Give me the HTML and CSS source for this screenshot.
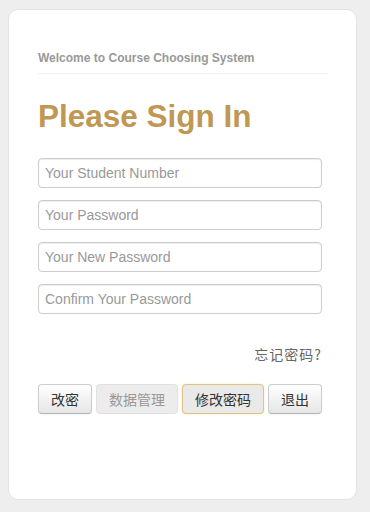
FILE: index.html
```html
<!DOCTYPE html>
<html lang="zh">
<head>
<meta charset="utf-8">
<title>Please Sign In</title>
<link rel="stylesheet" href="styles.css">
</head>
<body>
<div class="card">
  <div class="welcome">Welcome to Course Choosing System</div>
  <h2 class="title">Please Sign In</h2>
  <form class="form">
    <input class="field" type="text" placeholder="Your Student Number">
    <input class="field" type="password" placeholder="Your Password">
    <input class="field" type="password" placeholder="Your New Password">
    <input class="field" type="password" placeholder="Confirm Your Password">
  </form>
  <div class="forgot"><span class="forgot-link">忘记密码?</span></div>
  <div class="actions">
    <button class="btn w2" type="button">改密</button>
    <button class="btn w4 disabled" type="button">数据管理</button>
    <button class="btn w4 focus" type="button">修改密码</button>
    <button class="btn w2" type="button">退出</button>
  </div>
</div>
</body>
</html>
```
FILE: styles.css
```css
html, body {
  margin: 0;
  padding: 0;
  background: #eeeeee;
}
body {
  font-family: "Liberation Sans", Arial, "Noto Sans CJK SC", sans-serif;
  font-size: 14px;
  line-height: 20px;
  color: #333;
  padding: 9px 0 0 8px;
}
.card {
  box-sizing: border-box;
  width: 349px;
  height: 491px;
  background: #fff;
  border: 1px solid #e3e3e3;
  border-radius: 10px;
  padding: 39px 28px 0 29px;
}
.welcome {
  font-size: 12px;
  font-weight: bold;
  line-height: 18px;
  color: #999;
  padding-bottom: 6px;
  border-bottom: 1px solid #eeeeee;
}
.title {
  margin: 22px 0 0 0;
  font-size: 31.5px;
  line-height: 40px;
  font-weight: bold;
  color: #c09853;
}
.form {
  margin: 22px 0 0 0;
  display: flex;
  flex-direction: column;
  gap: 12px;
}
.field {
  box-sizing: border-box;
  width: 284px;
  height: 30px;
  margin: 0;
  padding: 4px 6px;
  font-family: "Liberation Sans", Arial, sans-serif;
  font-size: 14px;
  line-height: 20px;
  color: #555;
  background: #fff;
  border: 1px solid #cccccc;
  border-radius: 4px;
  box-shadow: inset 0 1px 1px rgba(0,0,0,0.075);
  outline: none;
}
.field::placeholder {
  color: #999;
}
.forgot {
  width: 284px;
  margin-top: 30px;
  text-align: right;
  line-height: 20px;
}
.forgot-link {
  font-family: "Noto Sans CJK SC", sans-serif;
  font-size: 14px;
  letter-spacing: 1px;
  color: #666;
}
.actions {
  margin-top: 19px;
  display: flex;
  gap: 4px;
}
.btn {
  box-sizing: border-box;
  height: 30px;
  margin: 0;
  padding: 4px 0;
  font-family: "Noto Sans CJK SC", sans-serif;
  font-size: 14px;
  line-height: 20px;
  color: #333;
  background: linear-gradient(#ffffff, #e6e6e6);
  border: 1px solid #cccccc;
  border-bottom-color: #b3b3b3;
  border-radius: 4px;
  box-shadow: inset 0 1px 0 rgba(255,255,255,0.2), 0 1px 2px rgba(0,0,0,0.05);
}
.w2 { width: 54px; }
.w4 { width: 82px; }
.btn.disabled {
  background: #ececec;
  color: #999;
  border-color: #e0e0e0;
  box-shadow: none;
}
.btn.focus {
  background: #e9e9e9;
  border: 1px solid #e2c27e;
  box-shadow: 0 0 2px rgba(240,200,120,0.6);
}
```
